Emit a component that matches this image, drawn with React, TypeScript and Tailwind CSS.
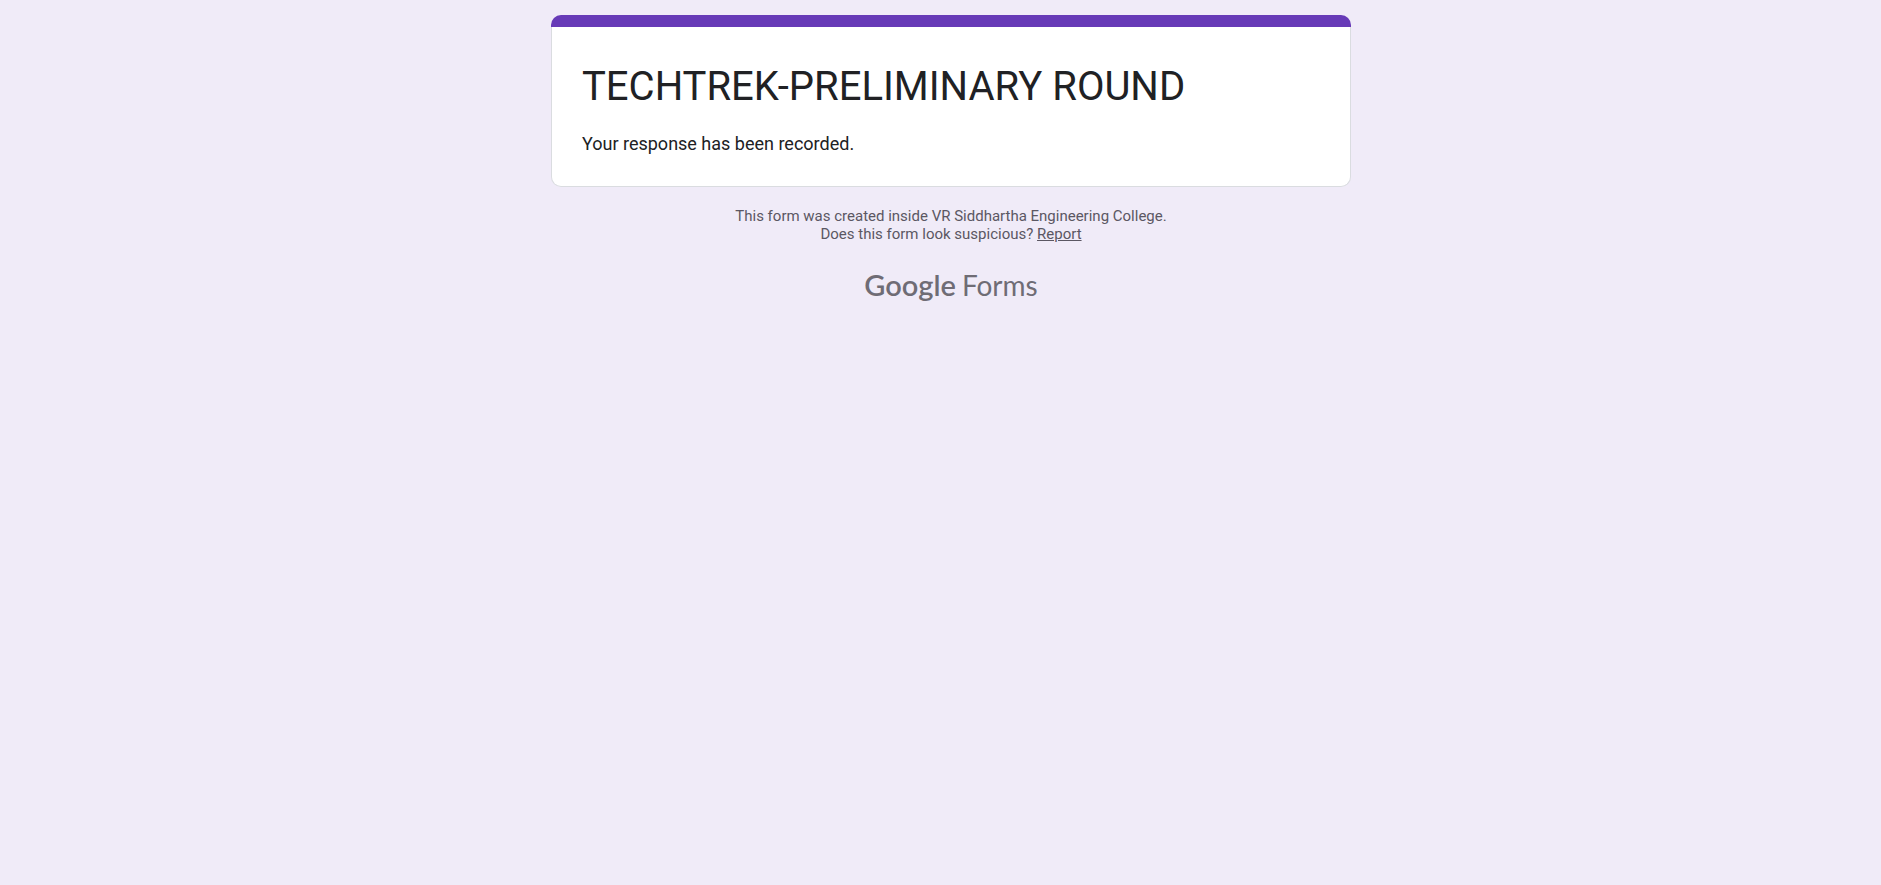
export default function App() {
  return (
    <div className="min-h-screen bg-[#f0ebf8] pl-[21px] font-['Roboto',sans-serif] text-[#202124]">
      <div className="mx-auto flex max-w-[800px] flex-col pt-[15px]">
        <main>
          <div className="h-3 rounded-t-[10px] bg-[#673ab7]" />
          <div className="rounded-b-[10px] border border-t-0 border-[#dadce0] bg-white px-[30px] pt-[33px] pb-[30px]">
            <h1 className="text-[40px] leading-[54px]">TECHTREK-PRELIMINARY ROUND</h1>
            <p className="mt-[18px] text-[18px] leading-6">Your response has been recorded.</p>
          </div>
        </main>
        <footer className="flex flex-col items-center pt-5 text-center">
          <p className="text-[15px] leading-[18px] text-[#5b5763]">
            This form was created inside VR Siddhartha Engineering College.
            <br />
            Does this form look suspicious?{" "}
            <a href="#report" className="underline">Report</a>
          </p>
          <a
            href="#forms"
            className="mt-[22px] flex items-baseline gap-1.5 font-['Lato',sans-serif] leading-10 text-[#6f6c75]"
          >
            <span className="text-[29px] font-semibold">Google</span>
            <span className="text-[28px]">Forms</span>
          </a>
        </footer>
      </div>
    </div>
  );
}
